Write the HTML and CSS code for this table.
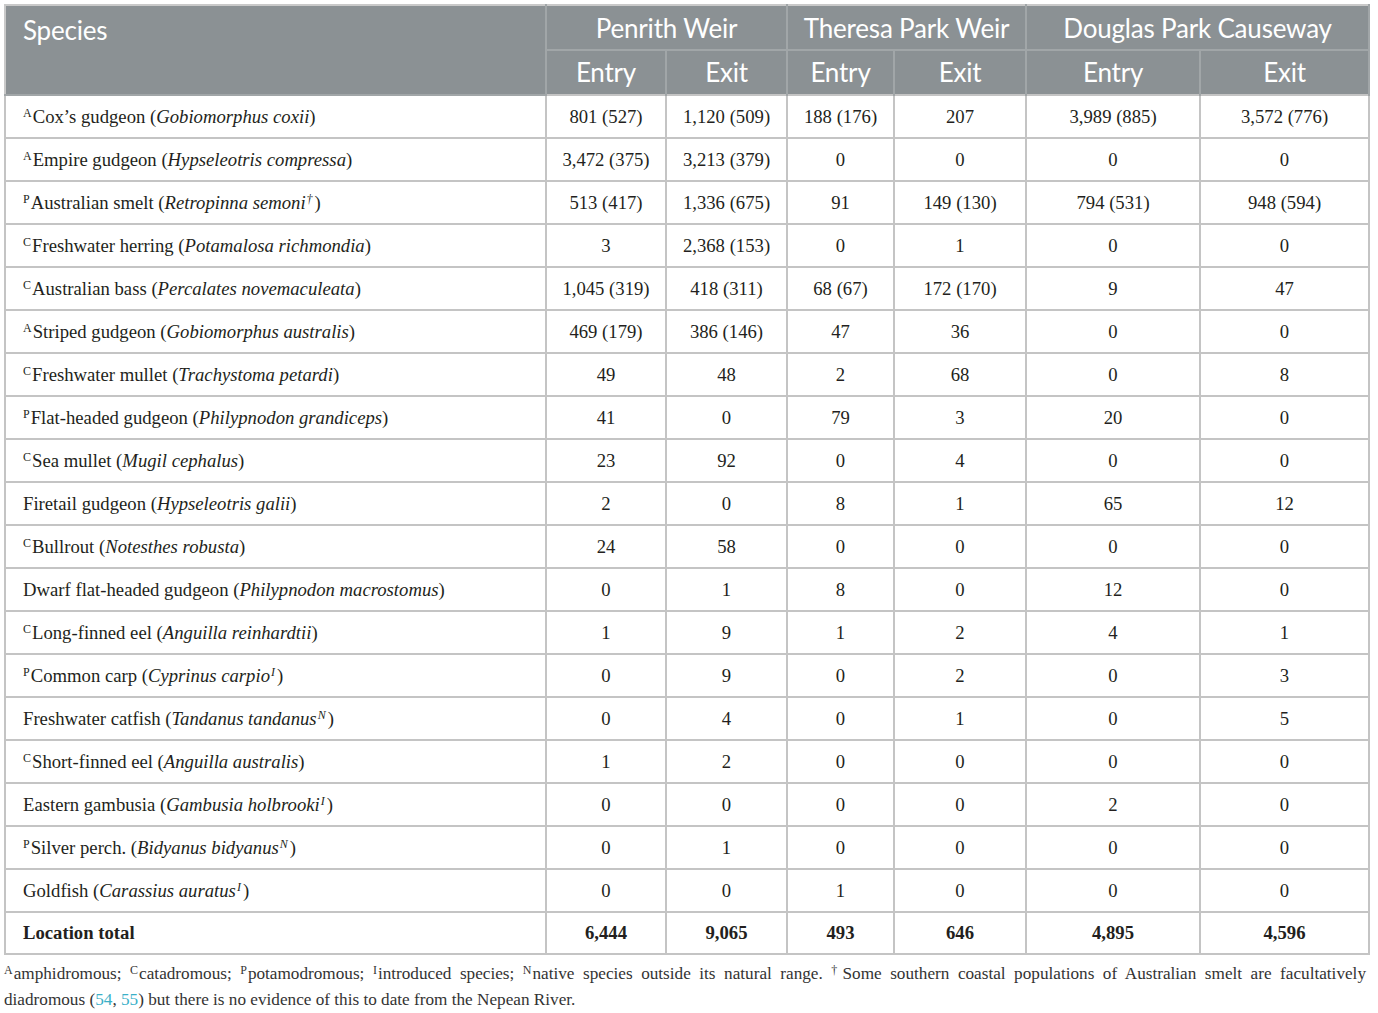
FILE: index.html
```html
<!DOCTYPE html>
<html>
<head>
<meta charset="utf-8">
<link rel="stylesheet" href="styles.css">
</head>
<body>
<table class="data">
  <colgroup>
    <col class="c-sp"><col class="c-pe"><col class="c-px"><col class="c-te"><col class="c-tx"><col class="c-de"><col class="c-dx">
  </colgroup>
  <thead>
    <tr class="h1">
      <th class="sp" rowspan="2">Species</th>
      <th colspan="2">Penrith Weir</th>
      <th colspan="2">Theresa Park Weir</th>
      <th colspan="2">Douglas Park Causeway</th>
    </tr>
    <tr class="h2">
      <th>Entry</th><th>Exit</th><th>Entry</th><th>Exit</th><th>Entry</th><th>Exit</th>
    </tr>
  </thead>
  <tbody>
    <tr><td class="sp"><sup>A</sup>Cox’s gudgeon (<i>Gobiomorphus coxii</i>)</td><td>801 (527)</td><td>1,120 (509)</td><td>188 (176)</td><td>207</td><td>3,989 (885)</td><td>3,572 (776)</td></tr>
    <tr><td class="sp"><sup>A</sup>Empire gudgeon (<i>Hypseleotris compressa</i>)</td><td>3,472 (375)</td><td>3,213 (379)</td><td>0</td><td>0</td><td>0</td><td>0</td></tr>
    <tr><td class="sp"><sup>P</sup>Australian smelt (<i>Retropinna semoni<sup>†</sup></i>)</td><td>513 (417)</td><td>1,336 (675)</td><td>91</td><td>149 (130)</td><td>794 (531)</td><td>948 (594)</td></tr>
    <tr><td class="sp"><sup>C</sup>Freshwater herring (<i>Potamalosa richmondia</i>)</td><td>3</td><td>2,368 (153)</td><td>0</td><td>1</td><td>0</td><td>0</td></tr>
    <tr><td class="sp"><sup>C</sup>Australian bass (<i>Percalates novemaculeata</i>)</td><td>1,045 (319)</td><td>418 (311)</td><td>68 (67)</td><td>172 (170)</td><td>9</td><td>47</td></tr>
    <tr><td class="sp"><sup>A</sup>Striped gudgeon (<i>Gobiomorphus australis</i>)</td><td>469 (179)</td><td>386 (146)</td><td>47</td><td>36</td><td>0</td><td>0</td></tr>
    <tr><td class="sp"><sup>C</sup>Freshwater mullet (<i>Trachystoma petardi</i>)</td><td>49</td><td>48</td><td>2</td><td>68</td><td>0</td><td>8</td></tr>
    <tr><td class="sp"><sup>P</sup>Flat-headed gudgeon (<i>Philypnodon grandiceps</i>)</td><td>41</td><td>0</td><td>79</td><td>3</td><td>20</td><td>0</td></tr>
    <tr><td class="sp"><sup>C</sup>Sea mullet (<i>Mugil cephalus</i>)</td><td>23</td><td>92</td><td>0</td><td>4</td><td>0</td><td>0</td></tr>
    <tr><td class="sp">Firetail gudgeon (<i>Hypseleotris galii</i>)</td><td>2</td><td>0</td><td>8</td><td>1</td><td>65</td><td>12</td></tr>
    <tr><td class="sp"><sup>C</sup>Bullrout (<i>Notesthes robusta</i>)</td><td>24</td><td>58</td><td>0</td><td>0</td><td>0</td><td>0</td></tr>
    <tr><td class="sp">Dwarf flat-headed gudgeon (<i>Philypnodon macrostomus</i>)</td><td>0</td><td>1</td><td>8</td><td>0</td><td>12</td><td>0</td></tr>
    <tr><td class="sp"><sup>C</sup>Long-finned eel (<i>Anguilla reinhardtii</i>)</td><td>1</td><td>9</td><td>1</td><td>2</td><td>4</td><td>1</td></tr>
    <tr><td class="sp"><sup>P</sup>Common carp (<i>Cyprinus carpio<sup>I</sup></i>)</td><td>0</td><td>9</td><td>0</td><td>2</td><td>0</td><td>3</td></tr>
    <tr><td class="sp">Freshwater catfish (<i>Tandanus tandanus<sup>N</sup></i>)</td><td>0</td><td>4</td><td>0</td><td>1</td><td>0</td><td>5</td></tr>
    <tr><td class="sp"><sup>C</sup>Short-finned eel (<i>Anguilla australis</i>)</td><td>1</td><td>2</td><td>0</td><td>0</td><td>0</td><td>0</td></tr>
    <tr><td class="sp">Eastern gambusia (<i>Gambusia holbrooki<sup>I</sup></i>)</td><td>0</td><td>0</td><td>0</td><td>0</td><td>2</td><td>0</td></tr>
    <tr><td class="sp"><sup>P</sup>Silver perch. (<i>Bidyanus bidyanus<sup>N</sup></i>)</td><td>0</td><td>1</td><td>0</td><td>0</td><td>0</td><td>0</td></tr>
    <tr><td class="sp">Goldfish (<i>Carassius auratus<sup>I</sup></i>)</td><td>0</td><td>0</td><td>1</td><td>0</td><td>0</td><td>0</td></tr>
    <tr class="total"><td class="sp">Location total</td><td>6,444</td><td>9,065</td><td>493</td><td>646</td><td>4,895</td><td>4,596</td></tr>
  </tbody>
</table>
<p class="notes"><sup>A</sup>amphidromous; <sup>C</sup>catadromous; <sup>P</sup>potamodromous; <sup>I</sup>introduced species; <sup>N</sup>native species outside its natural range. <sup>†</sup>Some southern coastal populations of Australian smelt are facultatively diadromous (<a href="#">54</a>, <a href="#">55</a>) but there is no evidence of this to date from the Nepean River.</p>
</body>
</html>
```
FILE: styles.css
```css
html, body {
  margin: 0;
  padding: 0;
  background: #ffffff;
}
body {
  padding: 4px 0 0 4px;
  font-family: "Liberation Serif", "Times New Roman", serif;
  color: #231f20;
}
.data {
  border-collapse: collapse;
  table-layout: fixed;
  width: 1364px;
  border: 2px solid #c9c9c9;
}
.c-sp { width: 541px; }
.c-pe { width: 120px; }
.c-px { width: 121px; }
.c-te { width: 107px; }
.c-tx { width: 132px; }
.c-de { width: 174px; }
.c-dx { width: 169px; }
thead th {
  background: #8b9194;
  color: #ffffff;
  font-family: "Lato", "Open Sans", sans-serif;
  font-weight: 400;
  font-size: 26px;
  letter-spacing: -0.2px;
  text-align: center;
  padding: 0;
  border: 2px solid #a1a6a8;
  border-top: 0;
}
thead th.sp {
  text-align: left;
  vertical-align: top;
  padding: 8px 0 0 17px;
  border-left: 0;
}
thead tr.h1 th { height: 43px; }
thead tr.h2 th { height: 41px; padding-bottom: 2px; }
thead tr.h2 th { border-bottom: 0; }
tbody td {
  height: 41px;
  padding: 0;
  border: 2px solid #c4c4c4;
  text-align: center;
  font-size: 18.7px;
  vertical-align: middle;
  white-space: nowrap;
}
tbody td.sp {
  text-align: left;
  padding-left: 17px;
}
sup {
  font-size: 12px;
  line-height: 0;
  vertical-align: 6px;
  font-style: normal;
  margin-right: 1px;
}
i sup { font-style: italic; margin-left: 1px; margin-right: 2px; }
.total td { font-weight: bold; height: 40px; }
.notes {
  margin: 6px 0 0 0;
  font-size: 17.2px;
  line-height: 26px;
  color: #333333;
  width: 1362px;
  text-align: justify;
}
.notes sup { font-size: 12px; vertical-align: 5px; margin-right: 1px; }
.notes a {
  color: #3ab0c8;
  text-decoration: none;
}
```
